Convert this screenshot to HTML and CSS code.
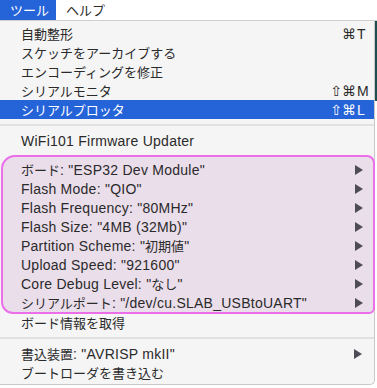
FILE: index.html
```html
<!DOCTYPE html>
<html lang="ja">
<head>
  <meta charset="UTF-8">
  <title>ツール</title>
  <link rel="stylesheet" href="styles.css">
</head>
<body>
  <div class="menubar">
    <div class="menubar-item active"><span class="ja">ツール</span></div>
    <div class="menubar-item"><span class="ja">ヘルプ</span></div>
  </div>

  <div class="backwin"></div>

  <div class="menu">
    <div class="item"><span class="ja">自動整形</span><span class="sc"><span class="mods">⌘</span><span class="key">T</span></span></div>
    <div class="item"><span class="ja">スケッチをアーカイブする</span></div>
    <div class="item"><span class="ja">エンコーディングを修正</span></div>
    <div class="item"><span class="ja">シリアルモニタ</span><span class="sc"><span class="mods">⇧⌘</span><span class="key">M</span></span></div>
    <div class="item selected"><span class="ja">シリアルプロッタ</span><span class="sc"><span class="mods">⇧⌘</span><span class="key">L</span></span></div>

    <div class="separator"></div>

    <div class="item">WiFi101 Firmware Updater</div>

    <div class="group">
      <div class="item"><span class="ja">ボード</span>: "ESP32 Dev Module"<span class="arrow"></span></div>
      <div class="item">Flash Mode: "QIO"<span class="arrow"></span></div>
      <div class="item">Flash Frequency: "80MHz"<span class="arrow"></span></div>
      <div class="item">Flash Size: "4MB (32Mb)"<span class="arrow"></span></div>
      <div class="item">Partition Scheme: "<span class="ja">初期値</span>"<span class="arrow"></span></div>
      <div class="item">Upload Speed: "921600"<span class="arrow"></span></div>
      <div class="item">Core Debug Level: "<span class="ja">なし</span>"<span class="arrow"></span></div>
      <div class="item"><span class="ja">シリアルポート</span>: "/dev/cu.SLAB_USBtoUART"<span class="arrow"></span></div>
    </div>

    <div class="item"><span class="ja">ボード情報を取得</span></div>

    <div class="separator"></div>

    <div class="item"><span class="ja">書込装置</span>: "AVRISP mkII"<span class="arrow"></span></div>
    <div class="item"><span class="ja">ブートローダを書き込む</span></div>
  </div>
</body>
</html>
```

FILE: styles.css
```css
* {
  box-sizing: border-box;
}

body {
  margin: 0;
  width: 377px;
  height: 388px;
  overflow: hidden;
  background: #fff;
  font-family: 'Liberation Sans', Arial, 'Noto Sans CJK JP', sans-serif;
  font-size: 14px;
  letter-spacing: 0.25px;
  color: #2a2a2a;
  position: relative;
}

.ja {
  font-family: 'Noto Sans CJK JP', sans-serif;
  font-size: 13px;
  letter-spacing: 0;
}

.menubar {
  height: 21px;
  display: flex;
  background: #fff;
  border-bottom: 1px solid #cfcfcf;
}

.menubar-item {
  height: 20px;
  line-height: 20px;
  padding: 0 10px;
  white-space: nowrap;
}

.menubar-item.active {
  background: #2463d8;
  color: #fff;
  width: 56px;
  padding: 0 0 0 10px;
}

/* window behind the menu, only a sliver shows */
.backwin {
  position: absolute;
  top: 21px;
  right: 0;
  width: 3px;
  height: 80px;
  background: #1e4e50;
}

.menu {
  width: 375px;
  background: #f5f5f5;
  border-right: 1px solid #c9c9c9;
  border-bottom: 1px solid #c9c9c9;
  border-bottom-right-radius: 5px;
  padding: 3px 0 2px;
  position: relative;
}

.item {
  height: 19px;
  display: flex;
  align-items: center;
  padding: 0 12px 0 21px;
  white-space: nowrap;
}

.item.selected {
  background: #2463d8;
  color: #fff;
}

.sc {
  margin-left: auto;
  display: flex;
  margin-right: -6px;
  font-family: 'DejaVu Sans', sans-serif;
  font-size: 14px;
  letter-spacing: 0;
}

.sc .mods {
  text-align: right;
}

.sc .key {
  width: 12px;
  padding-left: 1px;
  font-family: 'Liberation Sans', sans-serif;
}

.arrow {
  margin-left: auto;
  width: 0;
  height: 0;
  border-left: 8px solid #4e4c57;
  border-top: 5px solid transparent;
  border-bottom: 5px solid transparent;
}

.separator {
  height: 12px;
  display: flex;
  align-items: center;
}

.separator::before {
  content: '';
  flex: 1;
  height: 2px;
  background: #e1e1e1;
}

.group {
  margin: 5px -1px -1px 1px;
  padding: 3px 0 0;
  background: #eadeea;
  border: 2px solid #eb6fe9;
  border-radius: 14px 8px 6px 12px;
}

.group .item {
  padding: 0 10px 0 18px;
}
```
